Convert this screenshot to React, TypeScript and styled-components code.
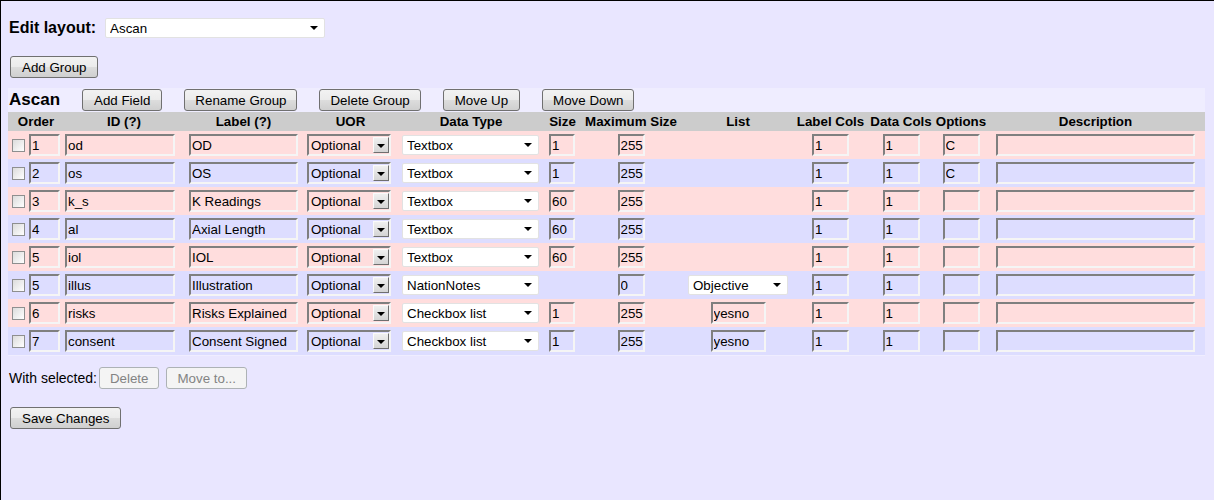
import React from "react";
import styled, { createGlobalStyle } from "styled-components";

const GlobalStyle = createGlobalStyle`
  html, body {
    margin: 0;
    padding: 0;
  }
  body {
    font-family: "Liberation Sans", Arial, sans-serif;
    font-size: 13.333px;
    color: #000;
  }
  * {
    box-sizing: border-box;
  }
`;

const COLS = "56px 120px 119px 95px 146px 37px 100px 114px 71px 70px 50px 219px";

const Page = styled.div`
  min-height: 100vh;
  background: #e9e6ff;
  border-top: 1px solid #000;
  border-left: 1px solid #000;
  padding: 17px 0 0 7px;
`;

const TitleRow = styled.div`
  display: flex;
  align-items: center;
  gap: 9px;
  margin-left: 1px;
  height: 20px;
`;

const Title = styled.span`
  font-weight: bold;
  font-size: 16px;
`;

const Button = styled.button<{ $pad?: number }>`
  height: 22px;
  padding: 0 ${(p) => p.$pad ?? 10}px;
  font-family: "Liberation Sans", Arial, sans-serif;
  font-size: 13.333px;
  color: #000;
  border: 1px solid #707070;
  border-radius: 3px;
  background: linear-gradient(#f2f2f2 0%, #ebebeb 50%, #dddddd 51%, #cfcfcf 100%);
  white-space: nowrap;

  &:disabled {
    color: #838383;
    border-color: #adb2b5;
    background: #f4f4f4;
  }
`;

const Block = styled.div<{ $top: number; $left?: number; $gap?: number }>`
  display: flex;
  align-items: center;
  gap: ${(p) => p.$gap ?? 0}px;
  margin-top: ${(p) => p.$top}px;
  margin-left: ${(p) => p.$left ?? 2}px;
`;

const Table = styled.div`
  margin-top: 10px;
  width: 1197px;
  background: #efedff;
  padding-bottom: 1px;
`;

const GroupRow = styled.div`
  display: flex;
  align-items: center;
  gap: 22px;
  height: 24px;
  padding-left: 1px;
`;

const GroupName = styled.span`
  font-weight: bold;
  font-size: 17px;
`;

const Row = styled.div<{ $bg: string; $h: number }>`
  display: grid;
  grid-template-columns: ${COLS};
  height: ${(p) => p.$h}px;
  background: ${(p) => p.$bg};
`;

const HeadCell = styled.div`
  display: flex;
  align-items: center;
  justify-content: center;
  font-weight: bold;
  white-space: nowrap;
`;

const Cell = styled.div<{ $pad?: number; $center?: boolean }>`
  display: flex;
  align-items: center;
  gap: 4px;
  padding-left: ${(p) => p.$pad ?? 0}px;
  justify-content: ${(p) => (p.$center ? "center" : "flex-start")};
`;

const Check = styled.input.attrs({ type: "checkbox" })`
  appearance: none;
  margin: 0;
  width: 13px;
  height: 13px;
  border: 1px solid #8e8f8f;
  background: linear-gradient(135deg, #dcdcdc, #f4f4f4 70%, #ffffff);
`;

const Field = styled.input<{ $w: number }>`
  width: ${(p) => p.$w}px;
  height: 22px;
  margin: 0;
  padding: 1px 0 0 1px;
  background: transparent;
  border: 2px solid;
  border-color: #7f7f7f #f5f5f5 #f5f5f5 #7f7f7f;
  font-family: "Liberation Sans", Arial, sans-serif;
  font-size: 13.333px;
  color: #000;
`;

const SelectWrap = styled.span`
  position: relative;
  display: inline-flex;
`;

const PlainSelect = styled.select<{ $w: number }>`
  appearance: none;
  width: ${(p) => p.$w}px;
  height: 20px;
  margin: 0;
  padding: 0 0 0 4px;
  background: #fff;
  border: 1px solid #e2e2e2;
  border-radius: 2px;
  font-family: "Liberation Sans", Arial, sans-serif;
  font-size: 13.333px;
  color: #000;
  outline: none;
`;

const Arrow = styled.span`
  position: absolute;
  right: 7px;
  top: 50%;
  margin-top: -2px;
  width: 0;
  height: 0;
  border-left: 4px solid transparent;
  border-right: 4px solid transparent;
  border-top: 4px solid #000;
  pointer-events: none;
`;

const InsetSelect = styled.select`
  appearance: none;
  width: 84px;
  height: 22px;
  margin: 0;
  padding: 0 0 0 2px;
  background: transparent;
  border: 2px solid;
  border-color: #7f7f7f #f5f5f5 #f5f5f5 #7f7f7f;
  font-family: "Liberation Sans", Arial, sans-serif;
  font-size: 13.333px;
  color: #000;
  outline: none;
`;

const DropButton = styled.span`
  position: absolute;
  right: 2px;
  top: 3px;
  width: 16px;
  height: 16px;
  border: 1px solid;
  border-color: #fafafa #6f6f6f #6f6f6f #fafafa;
  background: linear-gradient(#f0f0f0, #d4d4d4);
  display: flex;
  align-items: center;
  justify-content: center;
  pointer-events: none;

  &::after {
    content: "";
    width: 0;
    height: 0;
    border-left: 4px solid transparent;
    border-right: 4px solid transparent;
    border-top: 4px solid #000;
    margin-top: 1px;
  }
`;

const Label = styled.span`
  font-size: 14px;
  margin-right: 2px;
`;

interface FieldRow {
  order: string;
  id: string;
  label: string;
  type: string;
  size: string;
  max: string;
  list?: "select" | "yesno";
  options: string;
}

const rows: FieldRow[] = [
  { order: "1", id: "od", label: "OD", type: "Textbox", size: "1", max: "255", options: "C" },
  { order: "2", id: "os", label: "OS", type: "Textbox", size: "1", max: "255", options: "C" },
  { order: "3", id: "k_s", label: "K Readings", type: "Textbox", size: "60", max: "255", options: "" },
  { order: "4", id: "al", label: "Axial Length", type: "Textbox", size: "60", max: "255", options: "" },
  { order: "5", id: "iol", label: "IOL", type: "Textbox", size: "60", max: "255", options: "" },
  { order: "5", id: "illus", label: "Illustration", type: "NationNotes", size: "", max: "0", list: "select", options: "" },
  { order: "6", id: "risks", label: "Risks Explained", type: "Checkbox list", size: "1", max: "255", list: "yesno", options: "" },
  { order: "7", id: "consent", label: "Consent Signed", type: "Checkbox list", size: "1", max: "255", list: "yesno", options: "" },
];

const headers = [
  "Order", "ID (?)", "Label (?)", "UOR", "Data Type", "Size", "Maximum Size",
  "List", "Label Cols", "Data Cols", "Options", "Description",
];

const Dropdown: React.FC<{ value: string; width: number }> = ({ value, width }) => (
  <SelectWrap>
    <PlainSelect $w={width} defaultValue={value}>
      <option>{value}</option>
    </PlainSelect>
    <Arrow />
  </SelectWrap>
);

const App: React.FC = () => {
  return (
    <Page>
      <GlobalStyle />
      <TitleRow>
        <Title>Edit layout:</Title>
        <Dropdown value="Ascan" width={220} />
      </TitleRow>

      <Block $top={18}>
        <Button $pad={11}>Add Group</Button>
      </Block>

      <Table>
        <GroupRow>
          <GroupName>Ascan</GroupName>
          <Button $pad={11}>Add Field</Button>
          <Button>Rename Group</Button>
          <Button>Delete Group</Button>
          <Button $pad={11}>Move Up</Button>
          <Button>Move Down</Button>
        </GroupRow>

        <Row $bg="#cccccc" $h={19}>
          {headers.map((h) => (
            <HeadCell key={h}>{h}</HeadCell>
          ))}
        </Row>

        {rows.map((r, i) => (
          <Row key={r.id} $bg={i % 2 === 0 ? "#ffdddd" : "#ddddff"} $h={28}>
            <Cell $pad={4}>
              <Check />
              <Field $w={31} defaultValue={r.order} />
            </Cell>
            <Cell $pad={1}>
              <Field $w={110} defaultValue={r.id} />
            </Cell>
            <Cell $pad={5}>
              <Field $w={109} defaultValue={r.label} />
            </Cell>
            <Cell $pad={4}>
              <SelectWrap>
                <InsetSelect defaultValue="Optional">
                  <option>Optional</option>
                </InsetSelect>
                <DropButton />
              </SelectWrap>
            </Cell>
            <Cell $pad={4}>
              <Dropdown value={r.type} width={137} />
            </Cell>
            <Cell $pad={5}>
              {r.size && <Field $w={26} defaultValue={r.size} />}
            </Cell>
            <Cell $center>
              <Field $w={27} defaultValue={r.max} />
            </Cell>
            <Cell $center>
              {r.list === "select" && <Dropdown value="Objective" width={100} />}
              {r.list === "yesno" && <Field $w={55} defaultValue="yesno" />}
            </Cell>
            <Cell $center>
              <Field $w={37} defaultValue="1" />
            </Cell>
            <Cell $center>
              <Field $w={37} defaultValue="1" />
            </Cell>
            <Cell $center>
              <Field $w={37} defaultValue={r.options} />
            </Cell>
            <Cell $center>
              <Field $w={199} defaultValue="" />
            </Cell>
          </Row>
        ))}
      </Table>

      <Block $top={11} $left={1} $gap={0}>
        <Label>With selected:</Label>
        <Button disabled>Delete</Button>
        <Button disabled style={{ marginLeft: 7 }}>Move to...</Button>
      </Block>

      <Block $top={18}>
        <Button $pad={11}>Save Changes</Button>
      </Block>
    </Page>
  );
};

export default App;
